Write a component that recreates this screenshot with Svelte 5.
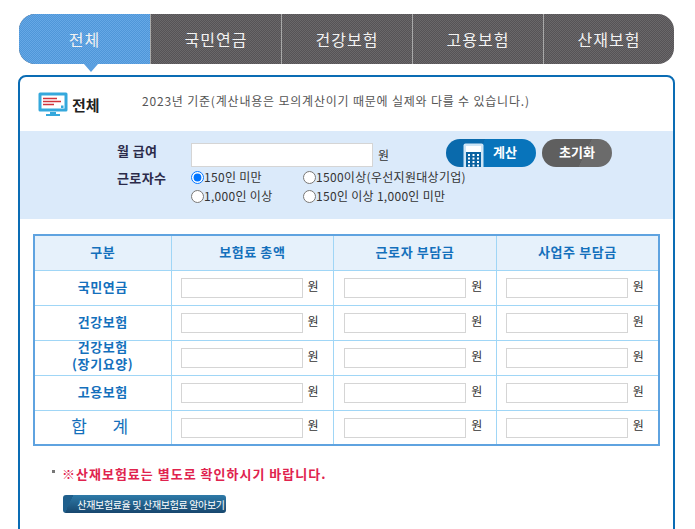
<script>
	const tabs = ['전체', '국민연금', '건강보험', '고용보험', '산재보험'];
	const heads = ['구분', '보험료 총액', '근로자 부담금', '사업주 부담금'];
	const rows = [['국민연금'], ['건강보험'], ['건강보험', '(장기요양)'], ['고용보험'], ['합  계']];
	const sizes = ['150인 미만', '1500이상(우선지원대상기업)', '1,000인 이상', '150인 이상 1,000인 미만'];
	let size = '150인 미만';
</script>

<div class="page">
	<ul class="tabs">
		{#each tabs as tab, i}
			<li class:on={i === 0}>{tab}</li>
		{/each}
	</ul>

	<div class="panel">
		<div class="title">
			<svg class="monitor" width="30" height="25" viewBox="0 0 30 25">
				<rect x="0.5" y="0.5" width="29" height="19" rx="1.5" fill="#35a8dc" />
				<rect x="3.5" y="3.5" width="23" height="13" fill="#fff" />
				<path d="M5 6.5h14M5 9.5h18M5 12.5h11" stroke="#d0343c" stroke-width="1.4" />
				<rect x="23" y="13.5" width="2.5" height="2.5" fill="#35a8dc" />
				<path d="M12 20h6v2h-6zM8 22h14v2H8z" fill="#35a8dc" />
			</svg>
			<strong>전체</strong>
			<p>2023년 기준(계산내용은 모의계산이기 때문에 실제와 다를 수 있습니다.)</p>
		</div>

		<div class="band">
			<div class="pay">
				<span class="label">월 급여</span>
				<input class="amount" type="text" />
				<span class="won">원</span>
				<button class="calc">
					<svg width="21" height="24" viewBox="0 0 21 24">
						<rect x="0.5" y="0.5" width="20" height="26" rx="2" fill="#cfe6f6" />
						<rect x="3" y="3" width="15" height="6" fill="#fff" />
						<rect x="3" y="9" width="15" height="15" fill="#0a62a0" />
						<path d="M5 12h2M9.5 12h2M14 12h2M5 15.5h2M9.5 15.5h2M14 15.5h2M5 19h2M9.5 19h2M14 19h2M5 22.5h2M9.5 22.5h2M14 22.5h2" stroke="#fff" stroke-width="2" />
					</svg>
					<span>계산</span>
				</button>
				<button class="reset">초기화</button>
			</div>
			<div class="workers">
				<span class="label">근로자수</span>
				<div class="radios">
					{#each sizes as s}
						<label><input type="radio" name="size" value={s} bind:group={size} />{s}</label>
					{/each}
				</div>
			</div>
		</div>

		<table>
			<thead>
				<tr>
					{#each heads as h}
						<th>{h}</th>
					{/each}
				</tr>
			</thead>
			<tbody>
				{#each rows as row, r}
					<tr>
						<th class:total={r === 4}>
							{#each row as line}
								<div>{line}</div>
							{/each}
						</th>
						{#each [0, 1, 2] as c}
							<td><input type="text" /><span>원</span></td>
						{/each}
					</tr>
				{/each}
			</tbody>
		</table>

		<p class="note">※산재보험료는 별도로 확인하시기 바랍니다.</p>
		<button class="more">산재보험료율 및 산재보험료 알아보기</button>
	</div>
</div>

<style>
	:global(body) {
		margin: 0;
		background: #fff;
		overflow: hidden;
	}
	.page {
		height: 529px;
		overflow: hidden;
		padding: 14px 20px 0 18px;
		box-sizing: border-box;
		font-family: 'Noto Sans CJK KR', 'Noto Sans', sans-serif;
		color: #333;
	}
	.tabs {
		display: flex;
		margin: 0 1px 11px 1px;
		padding: 0;
		list-style: none;
		height: 50px;
		background-color: #5f5c5f;
		background-image: conic-gradient(#6a686a 25%, #565356 0 50%, #6a686a 0 75%, #565356 0);
		background-size: 2px 2px;
		border-radius: 16px;
	}
	.tabs li {
		position: relative;
		flex: 1;
		display: flex;
		align-items: center;
		justify-content: center;
		color: #f2f2f2;
		font-size: 16px;
		letter-spacing: 1px;
		border-left: 1px solid #a8a8a8;
	}
	.tabs li.on {
		flex: none;
		width: 131px;
		border-left: 0;
		background-color: #5a9fe0;
		background-image: conic-gradient(#66a8e6 25%, #4f96d8 0 50%, #66a8e6 0 75%, #4f96d8 0);
		background-size: 2px 2px;
		border-radius: 16px 0 0 16px;
	}
	.tabs li.on::after {
		content: '';
		position: absolute;
		left: 65px;
		top: 50px;
		border-top: 8px solid #5a9fe0;
		border-left: 7px solid transparent;
		border-right: 7px solid transparent;
	}
	.panel {
		height: 500px;
		border: 2px solid #0a6cb4;
		border-radius: 8px;
		background: #fff;
	}
	.title {
		display: flex;
		align-items: center;
		height: 54px;
		padding-left: 18px;
	}
	.monitor {
		margin-right: 4px;
	}
	.title strong {
		width: 70px;
		font-size: 15px;
		color: #222;
	}
	.title p {
		margin: 0 0 8px;
		font-size: 12px;
		letter-spacing: 0.8px;
		color: #555;
	}
	.band {
		height: 88px;
		box-sizing: border-box;
		padding: 8px 0 0 97px;
		background: #dbeafa;
		font-size: 12px;
		color: #333;
	}
	.label {
		width: 74px;
		flex: none;
		font-weight: 700;
		font-size: 13px;
		letter-spacing: 0.4px;
		color: #2b2b4a;
	}
	.pay {
		display: flex;
		align-items: center;
		height: 28px;
	}
	.pay .label {
		margin-bottom: 5px;
	}
	.amount {
		width: 182px;
		height: 24px;
		margin: 4px 0 0;
		box-sizing: border-box;
		border: 1px solid #d5d5d5;
		background: #fff;
	}
	.won {
		margin: 2px 0 0 5px;
		width: 68px;
		color: #333;
	}
	.pay button {
		border: 0;
		padding: 0;
		height: 28px;
		border-radius: 14px;
		font-family: inherit;
		font-size: 13px;
		font-weight: 700;
		color: #fff;
		overflow: hidden;
	}
	.calc {
		display: flex;
		width: 90px;
		background: linear-gradient(115deg, #0a6aac 0 38%, #0874bb 38%);
	}
	.calc svg {
		margin: 4px 0 0 17px;
		flex: none;
	}
	.calc span {
		margin: 3px 0 0 9px;
	}
	.pay .reset {
		width: 70px;
		margin-left: 6px;
		padding-bottom: 4px;
		background: linear-gradient(115deg, #5f5f5f 0 60%, #6b6b6b 60%);
	}
	.workers {
		display: flex;
	}
	.workers .label {
		line-height: 22px;
	}
	.radios {
		display: grid;
		grid-template-columns: 112px auto;
		grid-auto-rows: 19px;
		line-height: 19px;
		letter-spacing: 0.3px;
	}
	.radios label {
		display: flex;
		align-items: center;
	}
	.radios input {
		width: 13px;
		height: 13px;
		margin: 1px 0 0 0;
	}
	table {
		width: 627px;
		margin: 15px 0 0 13px;
		border-collapse: collapse;
		table-layout: fixed;
		border: 2px solid #5fa3e0;
		font-size: 12px;
	}
	th,
	td {
		height: 35px;
		padding: 0;
		border: 1px solid #a0d6f6;
		box-sizing: border-box;
	}
	th {
		padding-bottom: 3px;
		color: #1470bc;
		font-size: 13px;
		line-height: 17px;
		letter-spacing: 0.6px;
	}
	/* two-line label has to stay inside a 35px row */
	th div:first-child:not(:only-child) {
		margin-top: -4px;
	}
	th div:last-child:not(:only-child) {
		margin-bottom: -2px;
	}
	thead th {
		background: #e6f1fb;
	}
	thead th:first-child {
		width: 137px;
	}
	th.total {
		font-size: 17px;
		font-weight: 400;
		white-space: pre;
		letter-spacing: 6px;
	}
	td {
		padding-left: 9px;
		color: #333;
		white-space: nowrap;
	}
	td:nth-child(3) {
		padding-left: 10px;
	}
	td input {
		width: 122px;
		height: 20px;
		box-sizing: border-box;
		border: 1px solid #d5d5d5;
		background: #fff;
		vertical-align: middle;
	}
	td span {
		margin-left: 5px;
		vertical-align: 1px;
	}
	.note {
		position: relative;
		margin: 19px 0 0 42px;
		font-size: 13px;
		font-weight: 700;
		letter-spacing: 1px;
		color: #e0234e;
		line-height: 18px;
	}
	.note::before {
		content: '';
		position: absolute;
		left: -10px;
		top: 5px;
		width: 3px;
		height: 3px;
		background: #777;
	}
	.more {
		display: block;
		width: 163px;
		height: 18px;
		margin: 12px 0 0 43px;
		padding: 0 0 0 13px;
		border: 0;
		border-radius: 3px;
		background: linear-gradient(115deg, #1f5f8c 0 6%, transparent 6%), linear-gradient(#2e7aa8, #17476e);
		color: #fff;
		font-family: inherit;
		font-size: 10px;
		letter-spacing: -0.35px;
		white-space: nowrap;
	}
</style>
